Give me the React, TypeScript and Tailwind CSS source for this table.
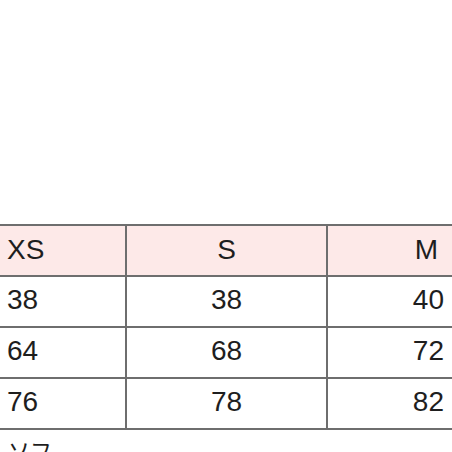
export default function App() {
  const rows = [
    ["38", "38", "40"],
    ["64", "68", "72"],
    ["76", "78", "82"],
  ];
  const font = { fontFamily: '"Liberation Sans", "Noto Sans CJK JP", sans-serif' };
  return (
    <div className="w-[452px] h-[452px] overflow-hidden bg-white text-[#1e1e1e]" style={font}>
      <div className="pt-[224px] -ml-[4px] w-[464px]">
        <div className="border-t-2 border-[#6e6e6e]">
          <div className="flex h-[51px] border-b-2 border-[#6e6e6e] bg-[#fde9e8] text-[28px] leading-none">
            <div className="w-[131px] border-r-2 border-[#6e6e6e] flex items-center pl-[11px] pb-[2px]">XS</div>
            <div className="w-[201px] border-r-2 border-[#6e6e6e] flex items-center justify-center pb-[2px]">S</div>
            <div className="flex-1 flex items-center justify-end pr-[22px] pb-[2px]">M</div>
          </div>
          {rows.map((r, i) => (
            <div key={i} className="flex h-[51px] border-b-2 border-[#6e6e6e] text-[28px] leading-none">
              <div className="w-[131px] border-r-2 border-[#6e6e6e] flex items-center pl-[11px] pb-[4px]">{r[0]}</div>
              <div className="w-[201px] border-r-2 border-[#6e6e6e] flex items-center justify-center pb-[4px]">{r[1]}</div>
              <div className="flex-1 flex items-center justify-end pr-[16px] pb-[4px]">{r[2]}</div>
            </div>
          ))}
        </div>
        <div className="pl-[12px] pt-[11px] text-[22px] leading-none">ソフ</div>
      </div>
    </div>
  );
}
